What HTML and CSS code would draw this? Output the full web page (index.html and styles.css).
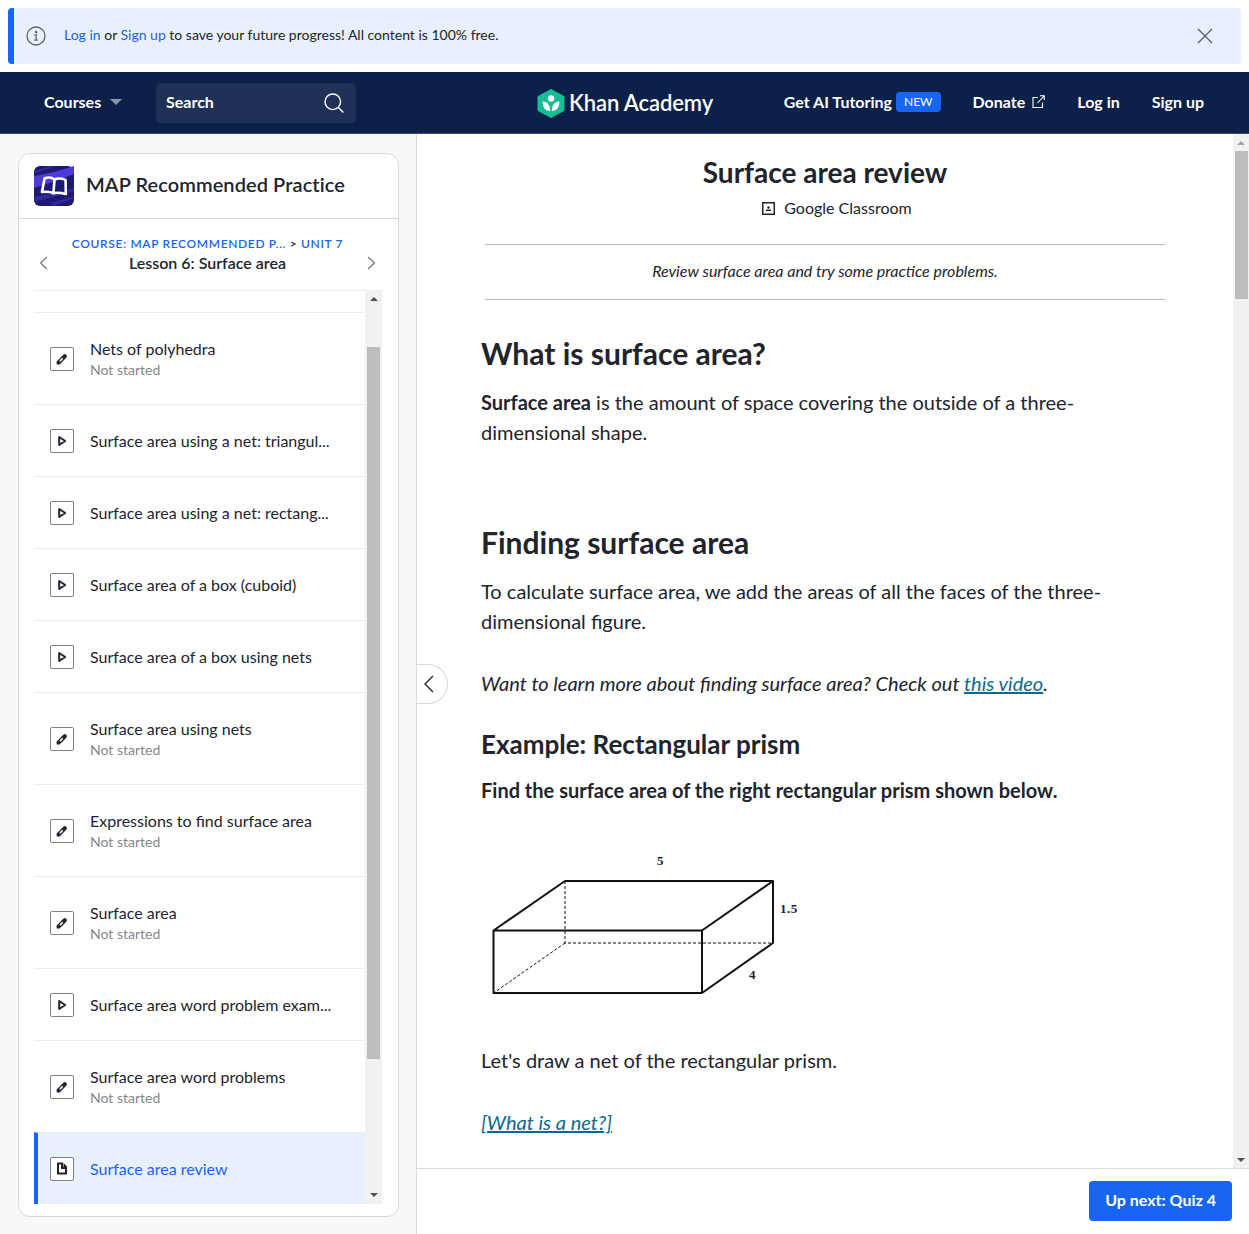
FILE: index.html
```html
<!DOCTYPE html>
<html lang="en">

<head>
    <meta charset="UTF-8">
    <title>Surface area review</title>
    <link rel="stylesheet" href="styles.css">
</head>

<body>
    <div class="banner">
        <svg class="banner-info" width="20" height="20" viewBox="0 0 20 20" fill="none" stroke="#5f6168" stroke-width="1.3">
            <circle cx="10" cy="10" r="9"></circle>
            <path d="M8.400 9h1.800v5M8.200 14.200h3.600"></path>
            <circle cx="10" cy="6" r="0.600" fill="#5f6168"></circle>
        </svg>
        <p class="banner-text"><a href="#">Log in</a> or <a href="#">Sign up</a> to save your future progress! All content is 100% free.</p>
        <svg class="banner-close" width="16" height="16" viewBox="0 0 16 16" fill="none" stroke="#5f6168" stroke-width="1.4">
            <path d="M1 1l14 14M15 1L1 15"></path>
        </svg>
    </div>

    <nav class="nav">
        <div class="nav-left">
            <a class="nav-courses" href="#">Courses<span class="nav-caret"></span></a>
            <div class="nav-search">
                <span>Search</span>
                <svg width="20" height="20" viewBox="0 0 20 20" fill="none" stroke="#fff" stroke-width="1.4">
                    <circle cx="8.800" cy="8.800" r="7.800"></circle>
                    <path d="M14.400 14.400l5 5"></path>
                </svg>
            </div>
        </div>
        <a class="nav-logo" href="#">
            <svg width="28" height="29" viewBox="0 0 28 29">
                <path d="M14 .5l13 7v14l-13 7-13-7v-14z" fill="#14bf96" stroke="#14bf96" stroke-linejoin="round"></path>
                <circle cx="14" cy="9.400" r="3.200" fill="#fff"></circle>
                <path d="M5.600 12.400c5 .2 7.400 3.400 7.600 9.600-5-.4-7.600-3.600-7.600-9.600zM22.400 12.400c-5 .2-7.400 3.400-7.600 9.600 5-.4 7.600-3.600 7.600-9.600z" fill="#fff"></path>
            </svg>
            <span>Khan Academy</span>
        </a>
        <div class="nav-right">
            <a href="#">Get AI Tutoring<span class="nav-badge">NEW</span></a>
            <a href="#">Donate
                <svg width="13" height="13" viewBox="0 0 13 13" fill="none" stroke="#fff" stroke-width="1.1">
                    <path d="M6 2.500H1v10h9.500V7.500M5.500 8L12 1M8 .8h4.200V5"></path>
                </svg>
            </a>
            <a href="#">Log in</a>
            <a href="#">Sign up</a>
        </div>
    </nav>

    <div class="page">
        <aside class="side">
            <div class="panel">
                <div class="panel-head">
                    <svg class="course-icon" width="40" height="40" viewBox="0 0 40 40">
                        <rect width="40" height="40" rx="6" fill="#1c1a6e"></rect>
                        <path d="M0 10L20 6 40 0v8L22 15 0 22z" fill="#4b3bd8"></path>
                        <path d="M0 5l16-5h6L0 8z" fill="#2f2a9c"></path>
                        <path d="M0 31l14-3 26-6v3L16 32 0 36zM16 37l24-7v2l-20 8z" fill="#2f2a9c"></path>
                        <g transform="rotate(5 20 20)">
                            <path d="M10 13c4-1.500 8-1 10 .5v14c-2-1.500-6-1.500-11.500-.5zM31 13c-4-1.500-9-1-11 .5v14c2-1.500 6-1.500 12.500-.5z" fill="none" stroke="#fff" stroke-width="2.600" stroke-linejoin="round"></path>
                        </g>
                    </svg>
                    <h2>MAP Recommended Practice</h2>
                </div>
                <div class="lesson-head">
                    <svg width="9" height="14" viewBox="0 0 9 14" fill="none" stroke="#777a80" stroke-width="1.3"><path d="M8 1L1.500 7 8 13"></path></svg>
                    <div class="lesson-title">
                        <div class="crumbs"><a href="#">COURSE: MAP RECOMMENDED P...</a> <span>&gt;</span> <a href="#">UNIT 7</a></div>
                        <div class="lesson-name">Lesson 6: Surface area</div>
                    </div>
                    <svg width="9" height="14" viewBox="0 0 9 14" fill="none" stroke="#777a80" stroke-width="1.3"><path d="M1 1l6.500 6L1 13"></path></svg>
                </div>
                <div class="list-wrap">
                    <ul class="list">
                        <li class="row row-spacer"></li>
                        <li class="row row-tall">
                            <span class="kind"><svg width="14" height="14" viewBox="0 0 14 14"><use href="#pencil"></use></svg></span>
                            <div class="row-text"><div class="row-name">Nets of polyhedra</div><div class="row-status">Not started</div></div>
                        </li>
                        <li class="row">
                            <span class="kind"><svg width="14" height="14" viewBox="0 0 14 14"><use href="#play"></use></svg></span>
                            <div class="row-name">Surface area using a net: triangul...</div>
                        </li>
                        <li class="row">
                            <span class="kind"><svg width="14" height="14" viewBox="0 0 14 14"><use href="#play"></use></svg></span>
                            <div class="row-name">Surface area using a net: rectang...</div>
                        </li>
                        <li class="row">
                            <span class="kind"><svg width="14" height="14" viewBox="0 0 14 14"><use href="#play"></use></svg></span>
                            <div class="row-name">Surface area of a box (cuboid)</div>
                        </li>
                        <li class="row">
                            <span class="kind"><svg width="14" height="14" viewBox="0 0 14 14"><use href="#play"></use></svg></span>
                            <div class="row-name">Surface area of a box using nets</div>
                        </li>
                        <li class="row row-tall">
                            <span class="kind"><svg width="14" height="14" viewBox="0 0 14 14"><use href="#pencil"></use></svg></span>
                            <div class="row-text"><div class="row-name">Surface area using nets</div><div class="row-status">Not started</div></div>
                        </li>
                        <li class="row row-tall">
                            <span class="kind"><svg width="14" height="14" viewBox="0 0 14 14"><use href="#pencil"></use></svg></span>
                            <div class="row-text"><div class="row-name">Expressions to find surface area</div><div class="row-status">Not started</div></div>
                        </li>
                        <li class="row row-tall">
                            <span class="kind"><svg width="14" height="14" viewBox="0 0 14 14"><use href="#pencil"></use></svg></span>
                            <div class="row-text"><div class="row-name">Surface area</div><div class="row-status">Not started</div></div>
                        </li>
                        <li class="row">
                            <span class="kind"><svg width="14" height="14" viewBox="0 0 14 14"><use href="#play"></use></svg></span>
                            <div class="row-name">Surface area word problem exam...</div>
                        </li>
                        <li class="row row-tall">
                            <span class="kind"><svg width="14" height="14" viewBox="0 0 14 14"><use href="#pencil"></use></svg></span>
                            <div class="row-text"><div class="row-name">Surface area word problems</div><div class="row-status">Not started</div></div>
                        </li>
                        <li class="row row-active">
                            <span class="kind"><svg width="14" height="14" viewBox="0 0 14 14"><use href="#doc"></use></svg></span>
                            <div class="row-name">Surface area review</div>
                        </li>
                    </ul>
                    <div class="scrollbar scrollbar-side">
                        <span class="arrow-up"></span>
                        <span class="thumb"></span>
                        <span class="arrow-down"></span>
                    </div>
                </div>
            </div>
        </aside>

        <main class="main">
            <div class="main-scroll">
                <article class="article">
                    <header class="article-head">
                        <h1>Surface area review</h1>
                        <div class="classroom">
                            <svg width="13" height="13" viewBox="0 0 13 13">
                                <rect x="0.750" y="0.750" width="11.500" height="11.500" fill="none" stroke="#21242c" stroke-width="1.500"></rect>
                                <circle cx="6.500" cy="5.500" r="1.200" fill="#21242c"></circle>
                                <rect x="4" y="7.500" width="5" height="1.500" fill="#21242c"></rect>
                            </svg>
                            <span>Google Classroom</span>
                        </div>
                    </header>
                    <p class="summary">Review surface area and try some practice problems.</p>

                    <h2 class="h-big h-first">What is surface area?</h2>
                    <p><strong>Surface area</strong> is the amount of space covering the outside of a three-dimensional shape.</p>

                    <h2 class="h-big h-second">Finding surface area</h2>
                    <p>To calculate surface area, we add the areas of all the faces of the three-dimensional figure.</p>
                    <p class="para-italic"><em>Want to learn more about finding surface area? Check out <a href="#">this video</a>.</em></p>

                    <h3 class="h-mid">Example: Rectangular prism</h3>
                    <p class="question"><strong>Find the surface area of the right rectangular prism shown below.</strong></p>

                    <svg class="prism" width="330" height="160" viewBox="0 0 330 160">
                        <g fill="none" stroke="#111" stroke-width="2" stroke-linejoin="round">
                            <path d="M12.500 80.500H221V143H12.500zM12.500 80.500L84 31H292V93L221 143M221 80.500L292 31"></path>
                        </g>
                        <path d="M84 31V93H292M84 93L12.500 143" fill="none" stroke="#111" stroke-width="1" stroke-dasharray="3 2"></path>
                        <text x="179.500" y="15" text-anchor="middle">5</text>
                        <text x="299" y="63">1.5</text>
                        <text x="271.500" y="129" text-anchor="middle">4</text>
                    </svg>

                    <p class="para-draw">Let's draw a net of the rectangular prism.</p>
                    <p class="para-italic"><em><a href="#">[What is a net?]</a></em></p>
                </article>
                <div class="scrollbar scrollbar-main">
                    <span class="arrow-up"></span>
                    <span class="thumb"></span>
                    <span class="arrow-down"></span>
                </div>
                <div class="collapse-tab">
                    <svg width="11" height="18" viewBox="0 0 11 18" fill="none" stroke="#21242c" stroke-width="1.400"><path d="M10 1L2 9l8 8"></path></svg>
                </div>
            </div>
            <footer class="main-foot">
                <a class="next-btn" href="#">Up next: Quiz 4</a>
            </footer>
        </main>
    </div>

    <svg class="defs" width="0" height="0">
        <symbol id="pencil" viewBox="0 0 14 14">
            <path d="M3.600 10.400L9.800 4.200" fill="none" stroke="#21242c" stroke-width="4.200" stroke-linecap="round"></path>
            <path d="M1.500 12.500l1-3 2 2z" fill="#21242c"></path>
            <path d="M4.900 9.100L7.700 6.300" fill="none" stroke="#fff" stroke-width="1.500"></path>
        </symbol>
        <symbol id="play" viewBox="0 0 14 14">
            <path d="M4.200 3l6 4-6 4z" fill="none" stroke="#21242c" stroke-width="2" stroke-linejoin="round"></path>
        </symbol>
        <symbol id="doc" viewBox="0 0 14 14">
            <path d="M3 1.500h4v4.500h4v5.500H3z" fill="none" stroke="#21242c" stroke-width="2"></path>
            <path d="M8.500 1l4 4h-4z" fill="#21242c"></path>
        </symbol>
    </svg>
</body>

</html>
```
FILE: styles.css
```css
* {
    box-sizing: border-box;
}

html,
body {
    margin: 0;
    height: 1234px;
    overflow: hidden;
}

body {
    background: #fff;
    color: #21242c;
    font-family: Lato, "Noto Sans", sans-serif;
    font-size: 16px;
    display: flex;
    flex-direction: column;
}

a {
    text-decoration: none;
    color: inherit;
}

/* login banner */
.banner {
    margin: 8px;
    height: 56px;
    background: #e9f0fd;
    border-left: 6px solid #1865f2;
    border-radius: 4px;
    display: flex;
    align-items: center;
    padding: 0 28px 0 12px;
    flex: none;
}

.banner-text {
    margin: 0 0 0 18px;
    padding-bottom: 4px;
    font-size: 14px;
    flex: 1;
}

.banner-text a {
    color: #1865f2;
}

/* top nav */
.nav {
    height: 62px;
    flex: none;
    background: #0c2149;
    border-bottom: 1px solid #3c4a6b;
    color: #fff;
    display: flex;
    align-items: center;
    padding: 0 45px 0 44px;
    font-size: 16px;
    font-weight: 700;
    position: relative;
}

.nav-left {
    display: flex;
    align-items: center;
}

.nav-courses {
    display: flex;
    align-items: center;
    width: 112px;
    padding-bottom: 2px;
}

.nav-caret {
    margin-left: 9px;
    border-left: 6px solid transparent;
    border-right: 6px solid transparent;
    border-top: 6px solid #8d95a6;
}

.nav-search {
    width: 200px;
    height: 40px;
    background: #1f3156;
    border-radius: 4px;
    display: flex;
    align-items: center;
    justify-content: space-between;
    padding: 0 12px 0 10px;
}

.nav-search span {
    padding-bottom: 2px;
}

.nav-logo {
    display: flex;
    align-items: center;
    gap: 4px;
    margin-left: 181px;
    font-size: 22px;
    font-weight: 600;
    letter-spacing: -0.1px;
}

.nav-logo svg {
    margin-top: 1px;
}

.nav-right {
    margin-left: auto;
    display: flex;
    align-items: center;
    gap: 32px;
}

.nav-right a {
    display: flex;
    align-items: center;
    padding-bottom: 2px;
}

.nav-right svg {
    margin-left: 7px;
}

.nav-badge {
    margin-left: 4px;
    background: #1865f2;
    border-radius: 4px;
    padding: 0 8px;
    height: 20px;
    line-height: 20px;
    font-size: 12px;
    font-weight: 400;
}

/* page columns */
.page {
    flex: 1;
    display: flex;
    min-height: 0;
    background: #f7f8fa;
}

.side {
    width: 416px;
    flex: none;
    padding: 19px 0 17px 18px;
}

.panel {
    height: 100%;
    width: 381px;
    background: #fff;
    border: 1px solid #d8d9db;
    border-radius: 12px;
    display: flex;
    flex-direction: column;
    padding-bottom: 12px;
}

.panel-head {
    height: 65px;
    flex: none;
    border-bottom: 1px solid #d8d9db;
    display: flex;
    align-items: center;
    padding-left: 15px;
    gap: 12px;
}

.panel-head h2 {
    margin: 0 0 4px;
    font-size: 20px;
    font-weight: 600;
    letter-spacing: 0.08px;
}

.lesson-head {
    height: 71px;
    flex: none;
    display: flex;
    align-items: center;
    justify-content: space-between;
    padding: 16px 22px 0 20px;
}

.lesson-title {
    text-align: center;
    margin-bottom: 17px;
}

.crumbs {
    font-size: 12px;
    font-weight: 600;
    letter-spacing: 0.65px;
    line-height: 18px;
    color: #21242c;
}

.crumbs a {
    color: #1865f2;
}

.lesson-name {
    font-size: 16px;
    font-weight: 600;
    line-height: 20px;
}

.list-wrap {
    flex: 1;
    min-height: 0;
    margin: 0 16px 0 15px;
    display: flex;
}

.list {
    list-style: none;
    margin: 0;
    padding: 0;
    flex: 1;
    min-width: 0;
    overflow: hidden;
}

.row {
    height: 72px;
    border-top: 1px solid #ececee;
    display: flex;
    align-items: center;
    padding-left: 16px;
    gap: 16px;
}

.row-spacer {
    height: 22px;
}

.row-tall {
    height: 92px;
}

.row-active {
    height: 72px;
    background: #e9f0fd;
    border-left: 4px solid #1865f2;
    padding-left: 12px;
}

.row-active .row-name {
    color: #1865f2;
}

.row-text {
    padding-top: 2px;
}

.kind {
    width: 24px;
    height: 24px;
    flex: none;
    border: 1px solid #80828a;
    border-radius: 2px;
    background: #fff;
    display: flex;
    align-items: center;
    justify-content: center;
}

.row-name {
    font-size: 16px;
    line-height: 20px;
}

.row-status {
    font-size: 14px;
    line-height: 20px;
    margin-top: 1px;
    color: #85878d;
}

/* scrollbars are plain blocks, the page itself never scrolls */
.scrollbar {
    width: 17px;
    flex: none;
    background: #f1f1f1;
    display: flex;
    flex-direction: column;
    align-items: center;
}

.thumb {
    width: 13px;
    background: #bdbdbd;
}

.arrow-up,
.arrow-down {
    flex: none;
    width: 0;
    height: 0;
    border-left: 4px solid transparent;
    border-right: 4px solid transparent;
}

.arrow-up {
    border-bottom: 4px solid #505050;
}

.arrow-down {
    border-top: 4px solid #505050;
}

.scrollbar-side .arrow-up {
    margin-top: 7px;
}

.scrollbar-side .thumb {
    margin-top: 46px;
    height: 712px;
}

.scrollbar-side .arrow-down {
    margin-top: auto;
    margin-bottom: 7px;
}

.scrollbar-main {
    width: 16px;
}

.scrollbar-main .arrow-up {
    margin-top: 7px;
    border-bottom-color: #a3a3a3;
}

.scrollbar-main .thumb {
    margin-top: 6px;
    height: 148px;
}

.scrollbar-main .arrow-down {
    margin-top: auto;
    margin-bottom: 6px;
}

/* article side */
.main {
    flex: 1;
    min-width: 0;
    background: #fff;
    border-left: 1px solid #d8d9db;
    display: flex;
    flex-direction: column;
}

.main-scroll {
    flex: 1;
    min-height: 0;
    display: flex;
    position: relative;
}

.article {
    flex: 1;
    min-width: 0;
    padding: 0 112px 0 64px;
    overflow: hidden;
    font-size: 20px;
    line-height: 30px;
}

.article-head {
    text-align: center;
    margin: 0 -112px 0 -64px;
}

.article-head h1 {
    margin: 20px 0 0;
    font-size: 28px;
    line-height: 36px;
    font-weight: 700;
}

.classroom {
    margin-top: 6px;
    padding-left: 24px;
    display: flex;
    align-items: center;
    justify-content: center;
    gap: 9px;
    font-size: 16px;
    line-height: 24px;
}

.article p {
    margin-top: 0;
    margin-bottom: 0;
}

.article .summary {
    margin: 24px 0 0 4px;
    width: 680px;
    height: 56px;
    border-top: 1px solid #b8b9bc;
    border-bottom: 1px solid #b8b9bc;
    font-size: 16px;
    font-style: italic;
    text-align: center;
    line-height: 51px;
}

.h-big {
    font-size: 30px;
    line-height: 38px;
    font-weight: 700;
    margin: 0 0 15px;
}

.h-first {
    margin-top: 34px;
}

.h-second {
    margin-top: 76px;
}

.article .para-italic {
    margin-top: 32px;
}

.article em a {
    color: #0c6a8c;
    text-decoration: underline;
}

.h-mid {
    font-size: 26px;
    line-height: 32px;
    font-weight: 700;
    margin: 30px 0 15px;
}

.prism {
    display: block;
    margin-top: 45px;
}

.prism text {
    font-family: "Liberation Serif", serif;
    font-size: 13px;
    font-weight: 700;
    letter-spacing: 0.5px;
    fill: #222;
}

.article .para-draw {
    margin-top: 35px;
}

.collapse-tab {
    position: absolute;
    left: 0;
    top: 530px;
    width: 31px;
    height: 40px;
    background: #fff;
    border: 1px solid #d8d9db;
    border-left: none;
    border-radius: 0 20px 20px 0;
    display: flex;
    align-items: center;
    padding-left: 6px;
}

.main-foot {
    height: 66px;
    flex: none;
    border-top: 1px solid #d8d9db;
    display: flex;
    align-items: flex-start;
    justify-content: flex-end;
    padding: 12px 17px 0 0;
}

.next-btn {
    height: 40px;
    line-height: 38px;
    padding: 0 16px;
    background: #1865f2;
    color: #fff;
    font-weight: 700;
    border-radius: 4px;
}

.defs {
    position: absolute;
}
```
